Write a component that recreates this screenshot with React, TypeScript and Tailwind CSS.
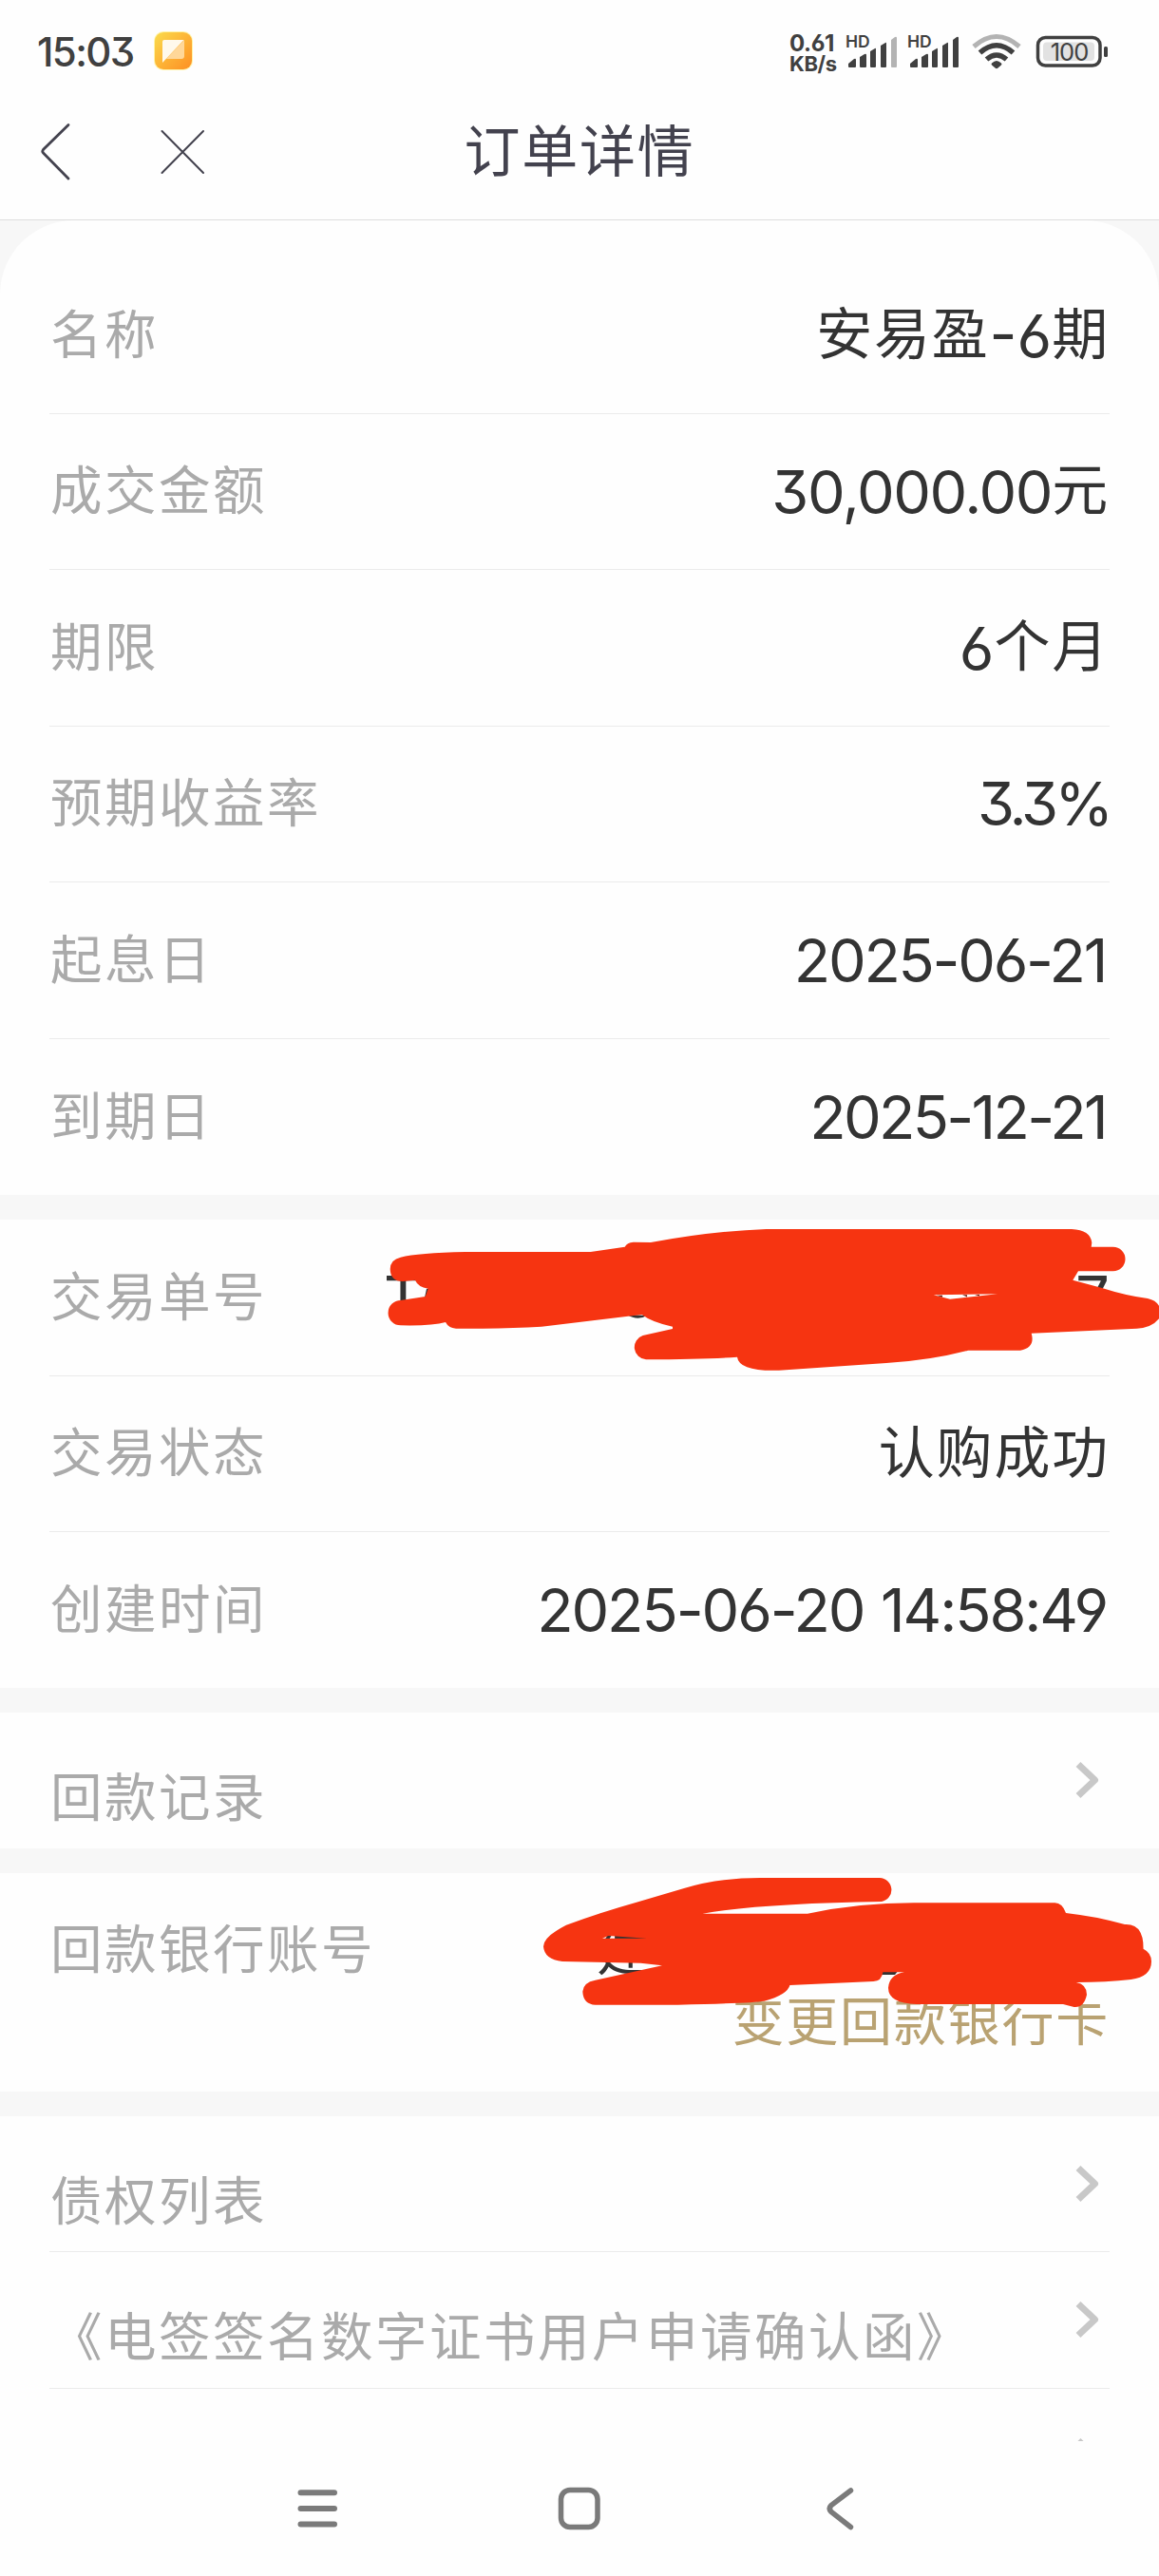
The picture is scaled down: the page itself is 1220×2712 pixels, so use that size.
import React from 'react';

type Part = { t: string; cjk?: boolean; cls?: string };

const basicRows: { label: string; value: Part[] }[] = [
  { label: '名称', value: [{ t: '安易盈', cjk: true }, { t: '-6', cls: 'tracking-[0px]' }, { t: '期', cjk: true }] },
  { label: '成交金额', value: [{ t: '30,000.00', cls: 'tracking-[-1.4px]' }, { t: '元', cjk: true }] },
  { label: '期限', value: [{ t: '6', cls: 'tracking-[0px]' }, { t: '个月', cjk: true }] },
  { label: '预期收益率', value: [{ t: '3.3%', cls: 'tracking-[-4px]' }] },
  { label: '起息日', value: [{ t: '2025-06-21', cls: 'tracking-[-2.3px] pr-[4px]' }] },
  { label: '到期日', value: [{ t: '2025-12-21', cls: 'tracking-[-2.7px] pr-[4px]' }] },
];

const Label = ({ children }: { children: React.ReactNode }) => (
  <span className="relative -top-[4px] left-[1px] text-[54.5px] leading-[80px] tracking-[2.5px] text-[#aaaaaa] whitespace-nowrap">
    {children}
  </span>
);

const Value = ({ parts }: { parts: Part[] }) => (
  <span className="flex items-baseline leading-[80px] text-[#333333] whitespace-pre">
    {parts.map((p, i) => (
      <span
        key={i}
        className={
          p.cjk
            ? 'relative -top-[4px] text-[59px] tracking-[1.8px]'
            : `font-['Inter'] text-[63px] [font-feature-settings:'cv03','cv04','cv09'] ${p.cls || 'tracking-[-2.6px]'}`
        }
      >
        {p.t}
      </span>
    ))}
  </span>
);

const Row = ({ label, last, children }: { label: string; last?: boolean; children: React.ReactNode }) => (
  <div
    className={`mx-[52px] h-[164.5px] flex items-center justify-between ${last ? '' : 'border-b-[1.5px] border-[#ebebeb]'}`}
  >
    <Label>{label}</Label>
    {children}
  </div>
);

const Chevron = () => (
  <svg className="mr-[10px]" width="26" height="40" viewBox="0 0 26 40" fill="none" stroke="#c8c8c8" strokeWidth="7">
    <path d="M3 3.5 L20.5 20 L3 36.5" strokeLinejoin="round" />
  </svg>
);

const LinkRow = ({ label, line }: { label: string; line?: boolean }) => (
  <div
    className={`mx-[52px] h-[143.5px] flex items-center justify-between ${line ? 'border-b-[1.5px] border-[#ebebeb]' : ''}`}
  >
    <div className="pt-[38px]">
      <Label>{label}</Label>
    </div>
    <Chevron />
  </div>
);

const Gap = () => <div className="h-[26px] shrink-0 bg-[#f7f7f7]" />;

const Signal = ({ weak }: { weak?: boolean }) => (
  <div className="relative w-[56px] h-[38px]">
    <span className="absolute left-0 -top-[1px] text-[17.5px] leading-[20px] font-semibold">HD</span>
    <svg width="56" height="38" viewBox="0 0 56 38" fill="#404040">
      <path d="M3 35v-3l6-5q2-1 2 1v7q0 1-1 1h-6q-1 0-1-1z" />
      <path d="M15 35V25l5-3q2-1 2 1v12q0 1-1 1h-5q-1 0-1-1z" />
      <path d="M26 35V19l5-3q1-1 1 1v18q0 1-1 1h-4q-1 0-1-1z" />
      <path d="M37 35V13l5-3q1-1 1 1v24q0 1-1 1h-4q-1 0-1-1z" />
      <path d="M48 35V7l4-3q2-1 2 1v30q0 1-1 1h-4q-1 0-1-1z" fill={weak ? '#b3b3b3' : '#404040'} />
    </svg>
  </div>
);

const StatusBar = () => (
  <div className="h-[108px] flex items-center pl-[39px] pr-[53px] text-[#404040] font-['Inter']">
    <span className="pt-[2px] text-[42px] leading-none font-medium tracking-[-1.6px] w-[122px] [font-feature-settings:'cv09']">
      15:03
    </span>
    <svg width="44" height="44" viewBox="0 0 44 44">
      <defs>
        <linearGradient id="note" x1="0" y1="0" x2="1" y2="1">
          <stop offset="0" stopColor="#fadb4c" />
          <stop offset="0.5" stopColor="#fdb436" />
          <stop offset="1" stopColor="#fd8f24" />
        </linearGradient>
      </defs>
      <rect x="1" y="1" width="41" height="41" rx="10" fill="#fff3a8" />
      <rect x="2" y="2" width="39" height="39" rx="9" fill="url(#note)" />
      <path d="M33 10v17q0 3-3 3H14z" fill="#ffd799" />
      <path d="M12 10h20.500L10 34V12q0-2 2-2z" fill="#fff9ec" />
    </svg>
    <div className="ml-auto flex items-center">
      <div className="flex flex-col pt-[3px] font-bold w-[59px] tracking-[-0.4px] [font-feature-settings:'cv03']">
        <span className="text-[24px] leading-[23px]">0.61</span>
        <span className="text-[22px] leading-[21px]">KB/s</span>
      </div>
      <Signal weak />
      <div className="w-[9px]" />
      <Signal />
      <svg className="ml-[12px]" width="52" height="38" viewBox="0 0 52 38" fill="none" strokeWidth="5">
        <path d="M2 14Q26-7 50 14" stroke="#b3b3b3" />
        <path d="M8.500 20.500Q26 5 43.500 20.500" stroke="#404040" strokeWidth="5.500" />
        <path d="M15.500 27.500Q26 18.500 36.500 27.500" stroke="#404040" strokeWidth="5.500" />
        <path d="M21 31.500q5-5 10 0q1 1 0 2l-3.500 3q-1.500 1.500-3 0l-3.500-3q-1-1 0-2z" fill="#404040" />
      </svg>
      <svg className="ml-[15px]" width="77" height="36" viewBox="0 0 77 36" fill="none">
        <rect x="2.500" y="3.500" width="65.500" height="29.500" rx="8" stroke="#404040" strokeWidth="3.500" />
        <rect x="8" y="8.500" width="54" height="19.500" rx="4" fill="#e2e2e2" />
        <rect x="72" y="13" width="4" height="11" rx="1.500" fill="#404040" />
        <text x="35.500" y="27.500" textAnchor="middle" fontFamily="Inter" fontSize="25.500" letterSpacing="-1" fill="#404040">100</text>
      </svg>
    </div>
  </div>
);

const App: React.FC = () => {
  return (
    <div className="w-[1220px] h-[2712px] overflow-hidden flex flex-col bg-[#fefefe] font-['Noto_Sans_CJK_SC',sans-serif]">
      <StatusBar />
      <header className="relative h-[124px] shrink-0 border-b border-[#dedede] flex items-start justify-center">
        <svg className="absolute left-[40px] top-[18px]" width="180" height="66" viewBox="0 0 180 66" fill="none" stroke="#43424e">
          <path d="M32 5.500L5.500 31.500Q4 33.500 5.500 35L32 62" strokeWidth="2.800" strokeLinecap="round" />
          <path d="M130.500 12L174 56M174 12L130.500 56" strokeWidth="2" strokeLinecap="round" />
        </svg>
        <h1 className="pt-[6px] text-[59px] leading-[84px] tracking-[1.8px] text-[#43424e]">订单详情</h1>
      </header>

      <main className="flex-1 min-h-0 overflow-hidden flex flex-col">
        <div className="bg-[#f7f7f7] shrink-0">
          <div className="bg-[#fefefe] rounded-t-[78px] pt-[39px]">
            {basicRows.map((r, i) => (
              <Row key={r.label} label={r.label} last={i === basicRows.length - 1}>
                <Value parts={r.value} />
              </Row>
            ))}
          </div>
        </div>
        <Gap />
        <div className="relative h-[492.5px] shrink-0">
          <Row label="交易单号">
            <span className="w-[764px] flex justify-between font-['Inter'] text-[63px] leading-[80px] text-[#333333]">
              <span>T</span>
              <span>7</span>
            </span>
          </Row>
          {/* marker strokes over the order number */}
          <svg className="absolute left-0 top-0" width="1220" height="164" viewBox="0 1284 1220 164">
            <path d="M660 1384Q671 1391 681 1385ZM447 1366L449 1357L453 1356V1366Z" fill="#333333" />
            <path
              fill="#f63411"
              fillRule="evenodd"
              d="M410.700 1336Q411 1326 421.700 1323.700Q440 1319 490 1318H621.700L657.700 1312.700Q660 1308 666.700 1307.700L685 1308Q750 1296 806.700 1294H1128Q1148 1295 1149.300 1308.300L1148.700 1312.700H1171.700A12.800 12.800 0 0 1 1171.700 1338.300H1135L1129.300 1347.700L1160 1356Q1185 1364 1208 1367Q1218 1369 1221 1377V1387Q1213 1398 1196.700 1398.700L1085.700 1403.700Q1090 1419 1074 1421.700H1019Q980 1432 933 1435L820 1442.700Q778 1444 776 1428.700Q740 1431 680 1431.300A13 13 0 0 1 676.700 1406L708 1399V1396.700Q686 1392 675.700 1384L570 1396.700Q530 1399 480 1398.700Q472 1398 469 1392Q455 1396 421.700 1395.300A13 13 0 0 1 421.700 1369L447.700 1365L450.700 1356.700Q440 1355 437 1347.700L424 1349Q411 1349 410.700 1336ZM982.700 1363.300L1000 1367.700L1050 1362.300Z"
            />
            <path d="M986 1363.700h6v2zM1013 1363.300h5v2.300zM1026 1363h5v1.500z" fill="#6b1d12" />
          </svg>
          <Row label="交易状态">
            <Value parts={[{ t: '认购成功', cjk: true }]} />
          </Row>
          <Row label="创建时间" last>
            <Value parts={[{ t: '2025-06-20 14:58:49', cls: 'tracking-[-2.1px] [word-spacing:2px] pr-[3px]' }]} />
          </Row>
        </div>
        <Gap />
        <div className="shrink-0">
          <LinkRow label="回款记录" />
        </div>
        <Gap />
        <div className="relative h-[229.5px] shrink-0 px-[52px]">
          <div className="flex justify-between pt-[41px]">
            <Label>回款银行账号</Label>
            <span className="relative -top-[4px] w-[540px] text-[58px] leading-[80px] text-[#333333]">建</span>
          </div>
          <div className="-mt-[9px] text-right text-[55px] leading-[80px] tracking-[1.8px] text-[#b9a272]">变更回款银行卡</div>
          {/* marker strokes over the bank account */}
          <svg className="absolute left-0 top-0" width="1220" height="230" viewBox="0 1972 1220 230">
            <path d="M928 2074h18l-4 5h-14z" fill="#333333" />
            <path
              fill="#f63411"
              fillRule="evenodd"
              d="M572 2049.300Q572 2039 596 2026.700Q630 2014 670 2002.700L720 1988Q755 1977 800 1977H926A12.600 12.600 0 0 1 928 2002Q800 2004 739.500 2014.700H850Q905 2003 965 2003.300H1110Q1118 2003 1122 2014Q1151 2017 1184 2026Q1204 2025 1203.500 2051.700Q1212 2056 1212 2065Q1212 2081 1190.500 2084Q1165 2087 1132.800 2087Q1144 2089 1144 2100Q1141 2114 1130.600 2113L1119 2110H965Q935 2109 935 2092.700Q936 2079 952 2076.300H929.400Q928 2086 919.400 2086L831.400 2090Q829 2100 804.500 2106.700Q790 2109 713.500 2110.700H626.700Q614 2110 613.300 2096.700Q614 2087 626.700 2084.700L697 2069.300L674.400 2066.700L592 2065Q573 2063 572 2049.300ZM634 2040.700L640.600 2038L681 2040.700Z"
            />
          </svg>
        </div>
        <Gap />
        <div className="shrink-0">
          <LinkRow label="债权列表" line />
          <LinkRow label="《电签签名数字证书用户申请确认函》" line />
          <LinkRow label="" />
        </div>
      </main>

      <nav className="h-[142px] shrink-0 bg-[#fefefe] flex justify-center">
        <svg width="620" height="142" viewBox="300 2570 620 142" fill="none" stroke="#7a7a7a">
          <path d="M316.500 2624.300h35.500M316.500 2641h35.500M316.500 2657.600h35.500" strokeWidth="6" strokeLinecap="round" />
          <rect x="590.500" y="2621.500" width="38.500" height="39" rx="9.500" strokeWidth="5.500" />
          <path d="M895.500 2622L875 2637.500Q871.500 2641 875 2644.500L895.500 2660.500" strokeWidth="5.500" strokeLinecap="round" />
        </svg>
      </nav>
    </div>
  );
};

export default App;
